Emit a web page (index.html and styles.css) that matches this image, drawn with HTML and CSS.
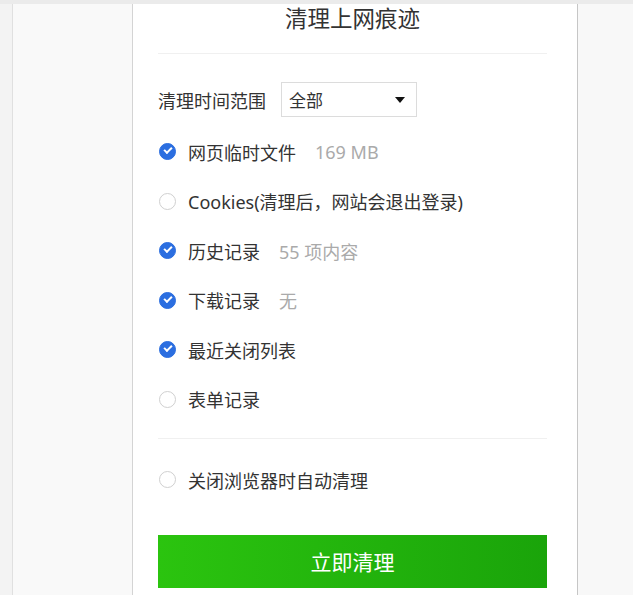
FILE: index.html
```html
<!DOCTYPE html>
<html lang="zh-CN">
  <head>
    <meta charset="UTF-8" />
    <meta name="viewport" content="width=device-width, initial-scale=1.0" />
    <title>清理上网痕迹</title>
    <link rel="stylesheet" href="styles.css">
  </head>
  <body>
    <div class="topbar"></div>
    <div class="page">
      <div class="edge"></div>
      <div class="gutter"></div>

      <!-- Clear dialog -->
      <div class="panel">
        <div class="panel-title">清理上网痕迹</div>

        <div class="range-row">
          <span class="range-label">清理时间范围</span>
          <div class="select">
            <span>全部</span>
            <span class="select-arrow"></span>
          </div>
        </div>

        <div class="check-list" id="checkList"></div>

        <div class="auto-clear">
          <div class="check-item">
            <span class="check"></span>
            <span class="check-label">关闭浏览器时自动清理</span>
          </div>
        </div>

        <button class="clear-btn">立即清理</button>
      </div>

      <div class="rest"></div>
    </div>

    <script>
      const items = [
        { label: "网页临时文件", extra: "169 MB", checked: true },
        { label: "Cookies(清理后，网站会退出登录)", extra: "", checked: false },
        { label: "历史记录", extra: "55 项内容", checked: true },
        { label: "下载记录", extra: "无", checked: true },
        { label: "最近关闭列表", extra: "", checked: true },
        { label: "表单记录", extra: "", checked: false }
      ];

      const list = document.getElementById("checkList");

      items.forEach((item) => {
        const row = document.createElement("div");
        row.className = "check-item";
        row.innerHTML = `
          <span class="check${item.checked ? " checked" : ""}"></span>
          <span class="check-label">${item.label}</span>
          ${item.extra ? `<span class="check-extra">${item.extra}</span>` : ""}
        `;
        list.appendChild(row);
      });

      document.querySelectorAll(".check").forEach((box) => {
        box.addEventListener("click", () => box.classList.toggle("checked"));
      });
    </script>
  </body>
</html>
```

FILE: styles.css
```css
body {
  margin: 0;
  background: #f8f8f8;
  font-family: "Noto Sans", "Noto Sans CJK SC", sans-serif;
  color: #333;
}

.topbar {
  height: 4px;
  background: #ebebeb;
}

.page {
  display: flex;
  height: 591px;
}

.edge {
  width: 12px;
  background: #f3f3f3;
  border-right: 1px solid #e0e0e0;
}

.gutter {
  width: 119px;
  background: #f9f9f9;
  border-right: 1px solid #d4d4d4;
}

.panel {
  width: 389px;
  padding: 0 30px 0 25px;
  background: #fff;
  border-right: 1px solid #c6c6c6;
}

.rest {
  flex: 1;
  background: #f8f8f8;
}

.panel-title {
  font-size: 22.5px;
  line-height: 30px;
  text-align: center;
  padding-bottom: 19px;
  border-bottom: 1px solid #f0f0f0;
}

.range-row {
  display: flex;
  align-items: center;
  gap: 15px;
  margin-top: 28px;
  font-size: 18px;
}

.select {
  width: 120px;
  height: 33px;
  padding: 0 7px;
  border: 1px solid #dcdcdc;
  display: flex;
  align-items: center;
  justify-content: space-between;
  font-size: 17px;
}

.select-arrow {
  width: 0;
  height: 0;
  margin-right: 4px;
  border-left: 5px solid transparent;
  border-right: 5px solid transparent;
  border-top: 6px solid #111;
}

.check-list {
  margin-top: 10px;
}

.check-item {
  display: flex;
  align-items: center;
  height: 49.5px;
  font-size: 18px;
}

.check {
  box-sizing: border-box;
  width: 17px;
  height: 17px;
  margin-left: 1px;
  margin-right: 12px;
  border: 1px solid #d0d0d0;
  border-radius: 50%;
  position: relative;
  cursor: pointer;
}

.check.checked {
  background: #2b6ee0;
  border-color: #2b6ee0;
}

.check.checked::after {
  content: "";
  position: absolute;
  left: 4px;
  top: 3px;
  width: 6px;
  height: 3px;
  border-left: 2px solid #fff;
  border-bottom: 2px solid #fff;
  transform: rotate(-45deg);
}

.check-extra {
  margin-left: 19px;
  color: #aaa;
}

.auto-clear {
  margin-top: 14px;
  padding-top: 16px;
  border-top: 1px solid #f0f0f0;
}

.clear-btn {
  display: block;
  width: 389px;
  height: 53px;
  margin-top: 30px;
  border: none;
  background: linear-gradient(to right, #2bc40f, #1aa40a);
  color: #fff;
  font-family: "Noto Sans", "Noto Sans CJK SC", sans-serif;
  font-size: 21px;
  cursor: pointer;
}
```
